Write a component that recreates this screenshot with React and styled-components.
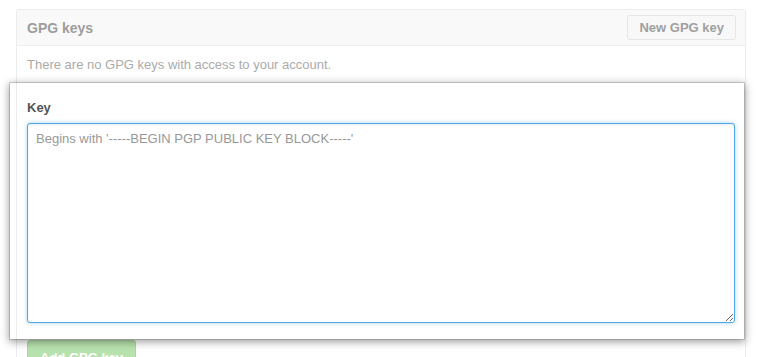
import React from 'react';
import styled, {createGlobalStyle} from 'styled-components';

const GlobalStyle = createGlobalStyle`
  html, body {
    margin: 0;
    padding: 0;
    background: #fff;
    font-family: "Liberation Sans", Arial, Helvetica, sans-serif;
    font-size: 13px;
  }
  * { box-sizing: border-box; }
`;

const Page = styled.div`
  width: 757px;
  height: 357px;
  overflow: hidden;
  padding: 9px 0 0 16px;
`;

// the faded settings box behind the spotlight
const Panel = styled.div`
  width: 730px;
  border: 1px solid #ececec;
  border-bottom: none;
  border-radius: 3px 3px 0 0;
`;

const Header = styled.div`
  display: flex;
  align-items: center;
  justify-content: space-between;
  height: 36px;
  padding: 0 9px 0 10px;
  background: #f9f9f9;
  border-bottom: 1px solid #eeeeee;
`;

const Title = styled.h3`
  margin: 0;
  font-size: 14px;
  font-weight: bold;
  color: #9d9d9d;
`;

const Button = styled.button`
  height: 25px;
  padding: 0 11px;
  font-family: inherit;
  font-size: 13px;
  font-weight: bold;
  border-radius: 3px;
  color: ${p => (p.primary ? '#fff' : '#a0a0a0')};
  background: ${p => (p.primary ? '#b8e2ad' : '#f8f8f8')};
  border: 1px solid ${p => (p.primary ? '#a9d89c' : '#e6e6e6')};
`;

const Empty = styled.p`
  margin: 0;
  padding: 10px 10px;
  line-height: 17px;
  color: #ababab;
`;

// highlighted part of the form, sits on top of the faded page
const Spotlight = styled.div`
  position: relative;
  z-index: 1;
  margin: 0 1px 0 -7px;
  background: #fff;
  box-shadow: 0 0 0 1px rgba(0, 0, 0, 0.15), 0 2px 8px 1px rgba(0, 0, 0, 0.38);
`;

const Inner = styled.div`
  margin-left: 6px;
  border-left: 1px solid #ececec;
  padding: 16px 8px 16px 10px;
`;

const Label = styled.label`
  display: block;
  font-weight: bold;
  line-height: 18px;
  color: #555;
  margin-bottom: 6px;
`;

const KeyInput = styled.textarea`
  display: block;
  width: 708px;
  height: 200px;
  padding: 6px 8px;
  font-family: inherit;
  font-size: 13px;
  line-height: 18px;
  color: #333;
  border: 1px solid #51a7e8;
  border-radius: 3px;
  outline: none;
  box-shadow: inset 0 1px 2px rgba(0, 0, 0, 0.075), 0 0 4px rgba(81, 167, 232, 0.5);
  &::placeholder {
    color: #999;
  }
`;

const Actions = styled.div`
  padding: 1px 10px 0;
`;

const AddButton = styled(Button)`
  height: 34px;
  padding: 0 12px;
`;

export default function App() {
  return (
    <>
      <GlobalStyle />
      <Page>
        <Panel>
          <Header>
            <Title>GPG keys</Title>
            <Button>New GPG key</Button>
          </Header>
          <Empty>There are no GPG keys with access to your account.</Empty>
          <Spotlight>
            <Inner>
              <Label htmlFor="gpg-key">Key</Label>
              <KeyInput id="gpg-key" placeholder="Begins with '-----BEGIN PGP PUBLIC KEY BLOCK-----'" />
            </Inner>
          </Spotlight>
          <Actions>
            <AddButton primary>Add GPG key</AddButton>
          </Actions>
        </Panel>
      </Page>
    </>
  );
}
